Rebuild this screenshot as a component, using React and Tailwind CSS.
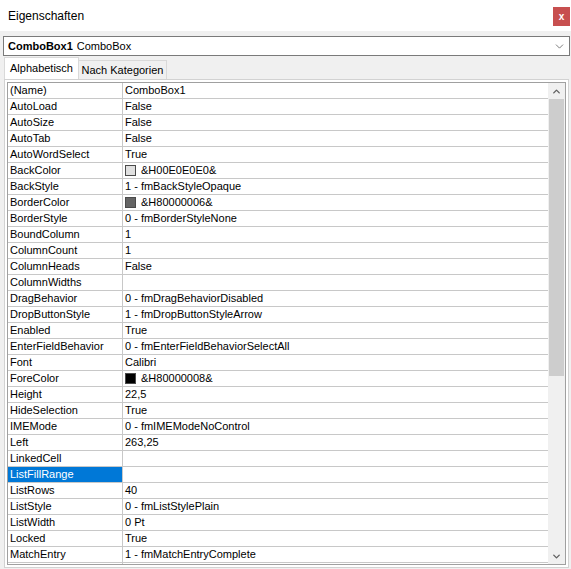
import { ChevronDown, ChevronUp } from "lucide-react";

const ROWS = [
  { name: "(Name)", value: "ComboBox1" },
  { name: "AutoLoad", value: "False" },
  { name: "AutoSize", value: "False" },
  { name: "AutoTab", value: "False" },
  { name: "AutoWordSelect", value: "True" },
  { name: "BackColor", value: "&H00E0E0E0&", swatch: "bg-[#e0e0e0]" },
  { name: "BackStyle", value: "1 - fmBackStyleOpaque" },
  { name: "BorderColor", value: "&H80000006&", swatch: "bg-[#646464]" },
  { name: "BorderStyle", value: "0 - fmBorderStyleNone" },
  { name: "BoundColumn", value: "1" },
  { name: "ColumnCount", value: "1" },
  { name: "ColumnHeads", value: "False" },
  { name: "ColumnWidths", value: "" },
  { name: "DragBehavior", value: "0 - fmDragBehaviorDisabled" },
  { name: "DropButtonStyle", value: "1 - fmDropButtonStyleArrow" },
  { name: "Enabled", value: "True" },
  { name: "EnterFieldBehavior", value: "0 - fmEnterFieldBehaviorSelectAll" },
  { name: "Font", value: "Calibri" },
  { name: "ForeColor", value: "&H80000008&", swatch: "bg-black" },
  { name: "Height", value: "22,5" },
  { name: "HideSelection", value: "True" },
  { name: "IMEMode", value: "0 - fmIMEModeNoControl" },
  { name: "Left", value: "263,25" },
  { name: "LinkedCell", value: "" },
  { name: "ListFillRange", value: "", selected: true },
  { name: "ListRows", value: "40" },
  { name: "ListStyle", value: "0 - fmListStylePlain" },
  { name: "ListWidth", value: "0 Pt" },
  { name: "Locked", value: "True" },
  { name: "MatchEntry", value: "1 - fmMatchEntryComplete" },
  { name: "MatchRequired", value: "False" },
  { name: "MouseIcon", value: "(None)" },
];

function PropRow({ row }) {
  return (
    <div className="flex h-[16px] border-b border-[#c8c8c8] shrink-0">
      <div
        className={`w-[115px] shrink-0 border-r border-[#c8c8c8] pl-[2px] leading-[15px] ${
          row.selected ? "bg-[#0078d7] text-white" : "text-black"
        }`}
      >
        {row.name}
      </div>
      <div className="flex-1 flex items-center pl-[2px] leading-[15px] text-black">
        {row.swatch && (
          <span className={`w-[11px] h-[11px] border border-[#4a4a4a] mr-[5px] ${row.swatch}`} />
        )}
        {row.value}
      </div>
    </div>
  );
}

export default function App() {
  return (
    <div
      className="w-[571px] h-[569px] bg-[#f0f0f0] flex flex-col overflow-hidden text-[11px]"
      style={{ fontFamily: '"Liberation Sans", Arial, sans-serif' }}
    >
      {/* Title bar */}
      <div className="h-[31px] bg-white flex items-start justify-between pl-[8px] pr-[1px] shrink-0">
        <span className="text-[12px] text-black mt-[7px]">Eigenschaften</span>
        <div className="w-[17px] h-[19px] mt-[7px] bg-[#c74f4f] flex items-center justify-center text-white text-[10px] font-bold leading-none">
          x
        </div>
      </div>

      {/* Object selector */}
      <div className="mt-[5px] ml-[3px] mr-[1px] h-[20px] bg-white border border-[#7a7a7a] flex items-center justify-between pl-[4px] pr-[3px] shrink-0">
        <div className="flex items-baseline gap-[4px] text-black">
          <span className="font-bold">ComboBox1</span>
          <span>ComboBox</span>
        </div>
        <ChevronDown className="w-[13px] h-[13px] text-[#606060]" strokeWidth={1.5} />
      </div>

      {/* Tabs */}
      <div className="flex items-end h-[22px] ml-[4px] mt-[1px] shrink-0">
        <div className="h-[22px] w-[75px] bg-white border border-b-0 border-[#d9d9d9] flex items-center justify-center text-black">
          Alphabetisch
        </div>
        <div className="h-[19px] w-[88px] bg-[#f0f0f0] border border-l-0 border-b-0 border-[#d9d9d9] flex items-center justify-center text-black">
          Nach Kategorien
        </div>
      </div>

      {/* Property grid */}
      <div className="flex-1 min-h-0 ml-[4px] mr-[2px] mb-[1px] border border-[#d2d2d2] bg-white p-[2px] flex flex-col">
        <div className="flex-1 min-h-0 border border-[#a0a0a0] flex overflow-hidden">
          <div className="flex-1 min-w-0 flex flex-col overflow-hidden">
            {ROWS.map((row) => (
              <PropRow key={row.name} row={row} />
            ))}
          </div>
          {/* Scrollbar */}
          <div className="w-[17px] bg-[#f0f0f0] flex flex-col shrink-0">
            <div className="h-[16px] flex items-center justify-center">
              <ChevronUp className="w-[11px] h-[11px] text-[#606060]" strokeWidth={3} />
            </div>
            <div className="h-[277px] mx-[1px] bg-[#cdcdcd]" />
            <div className="flex-1" />
            <div className="h-[16px] flex items-center justify-center">
              <ChevronDown className="w-[11px] h-[11px] text-[#606060]" strokeWidth={3} />
            </div>
          </div>
        </div>
      </div>
    </div>
  );
}
